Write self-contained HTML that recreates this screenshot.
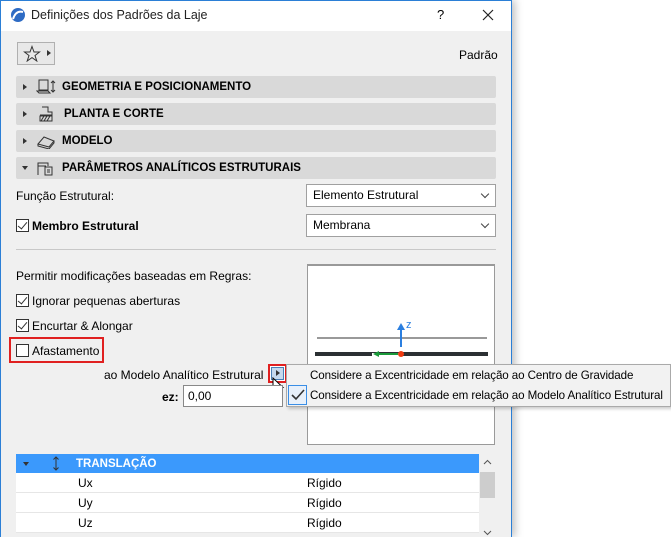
<!DOCTYPE html>
<html><head><meta charset="utf-8"><style>
*{box-sizing:border-box;margin:0;padding:0}
body{width:671px;height:537px;background:#fff;font-family:"Liberation Sans",sans-serif;font-size:12px;color:#000;position:relative;overflow:hidden;white-space:nowrap}
.abs{position:absolute}
.win{left:0;top:0;width:512px;height:537px;background:#f0f0f0;border-left:1px solid #2b7fd6;border-right:1px solid #2b7fd6;border-top:1px solid #2b7fd6;box-shadow:3px 0 8px rgba(0,0,0,.25)}
.title{left:1px;top:1px;width:510px;height:30px;background:#fff}
.bar{left:16px;width:480px;height:22px;background:#d9d9d9;border-radius:2px;font-weight:bold;font-size:11.5px;line-height:22px}
.bar .tri{position:absolute;left:7px;top:8px;width:0;height:0;border-top:3px solid transparent;border-bottom:3px solid transparent;border-left:4px solid #333}
.bar .tri.d{left:6px;top:9px;border-left:3px solid transparent;border-right:3px solid transparent;border-top:4px solid #333;border-bottom:0}
.bar span{position:absolute;left:46px}
.dd{left:306px;width:190px;height:23px;background:#fff;border:1px solid #a0a0a0;padding-left:6px;line-height:21px}
.dd:after{content:"";position:absolute;right:7px;top:6px;width:5px;height:5px;border-right:1px solid #444;border-bottom:1px solid #444;transform:rotate(45deg)}
.cb{width:13px;height:13px;border:1px solid #333;background:#fff}
.cb.on:after{content:"";position:absolute;left:3px;top:0px;width:4px;height:8px;border-right:1.5px solid #333;border-bottom:1.5px solid #333;transform:rotate(40deg)}
.row{left:16px;width:463px;height:20px;background:#fff;border-bottom:1px solid #e6e6e6;line-height:21px}
.pm{font-size:11.6px;letter-spacing:-0.1px}
</style></head><body>
<div class="abs win"></div>
<div class="abs title"></div>
<svg class="abs" style="left:10px;top:7px" width="16" height="16"><circle cx="8" cy="8" r="7" fill="#2d6bc4"/><path d="M3 12 Q6 3 13 5" stroke="#fff" stroke-width="2" fill="none"/></svg>
<div class="abs" style="left:31px;top:8px;font-size:12.5px;color:#222">Definições dos Padrões da Laje</div>
<div class="abs" style="left:437px;top:7px;font-size:13px">?</div>
<svg class="abs" style="left:482px;top:9px" width="12" height="12"><path d="M1 1L11 11M11 1L1 11" stroke="#222" stroke-width="1.2"/></svg>
<div class="abs" style="left:17px;top:42px;width:38px;height:23px;border:1px solid #b0b0b0;background:#e8e8e8"></div>
<svg class="abs" style="left:23px;top:45px" width="18" height="17"><path d="M9 1.5L11 7H16.5L12 10.5L13.8 16L9 12.6L4.2 16L6 10.5L1.5 7H7Z" fill="none" stroke="#333" stroke-width="1"/></svg>
<div class="abs" style="left:47px;top:50px;border-top:3px solid transparent;border-bottom:3px solid transparent;border-left:4px solid #333"></div>
<div class="abs" style="left:459px;top:48px">Padrão</div>

<div class="abs bar" style="top:76px"><i class="tri"></i><svg class="abs" style="left:20px;top:3px" width="22" height="16"><rect x="3" y="1" width="9" height="10" fill="none" stroke="#333"/><path d="M1 12h11l2 2H3z" fill="none" stroke="#333"/><path d="M17 2v11M15 4l2-2 2 2M15 11l2 2 2-2" stroke="#333" fill="none"/></svg><span style="left:46px">GEOMETRIA E POSICIONAMENTO</span></div>
<div class="abs bar" style="top:103px"><i class="tri"></i><svg class="abs" style="left:20px;top:3px" width="22" height="16"><path d="M6 1h6v5h4v3H4" fill="none" stroke="#333"/><rect x="4" y="10" width="12" height="5" fill="none" stroke="#333"/><path d="M5 15l3-5M8 15l3-5M11 15l3-5" stroke="#333"/></svg><span style="left:48px">PLANTA E CORTE</span></div>
<div class="abs bar" style="top:130px"><i class="tri"></i><svg class="abs" style="left:20px;top:3px" width="22" height="16"><path d="M2 11l6-7 10 4-5 6z" fill="none" stroke="#333"/><path d="M2 11v2l11 3 5-6v-2" fill="none" stroke="#333"/></svg><span style="left:46px">MODELO</span></div>
<div class="abs bar" style="top:157px"><i class="tri d"></i><svg class="abs" style="left:20px;top:3px" width="22" height="16"><path d="M2 15V3h10v3M2 6h8" fill="none" stroke="#333"/><rect x="9" y="7" width="7" height="8" fill="none" stroke="#333"/><path d="M11 10h3M11 12h3" stroke="#333"/></svg><span style="left:46px">PARÂMETROS ANALÍTICOS ESTRUTURAIS</span></div>

<div class="abs" style="left:16px;top:189px">Função Estrutural:</div>
<div class="abs dd" style="top:184px">Elemento Estrutural</div>
<div class="abs cb on" style="left:16px;top:219px"></div>
<div class="abs" style="left:32px;top:219px;font-weight:bold">Membro Estrutural</div>
<div class="abs dd" style="top:214px">Membrana</div>
<div class="abs" style="left:16px;top:249px;width:480px;height:1px;background:#c8c8c8"></div>

<div class="abs" style="left:16px;top:269px">Permitir modificações baseadas em Regras:</div>
<div class="abs cb on" style="left:16px;top:294px"></div><div class="abs" style="left:32px;top:294px">Ignorar pequenas aberturas</div>
<div class="abs cb on" style="left:16px;top:319px"></div><div class="abs" style="left:32px;top:319px">Encurtar &amp; Alongar</div>
<div class="abs" style="left:9px;top:337px;width:95px;height:26px;border:2px solid #e02020"></div>
<div class="abs cb" style="left:16px;top:344px"></div><div class="abs" style="left:32px;top:344px">Afastamento</div>
<div class="abs" style="left:104px;top:368px">ao Modelo Analítico Estrutural</div>
<div class="abs" style="left:268px;top:364px;width:19px;height:19px;border:2px solid #e02020;background:#fff"></div>
<div class="abs" style="left:271px;top:367px;width:13px;height:13px;background:#c5d9ee;border:1px solid #4a7fb5"></div>
<div class="abs" style="left:276px;top:370px;border-top:3.5px solid transparent;border-bottom:3.5px solid transparent;border-left:4px solid #333"></div>
<svg class="abs" style="left:272px;top:377px" width="14" height="20"><path d="M1 1V15L4.5 11.5L7 17L9 16L6.5 10.5H11Z" fill="#fff" stroke="#000"/></svg>
<div class="abs" style="left:162px;top:390px;font-weight:bold">ez:</div>
<div class="abs" style="left:183px;top:385px;width:100px;height:22px;background:#fff;border:1px solid #888;padding-left:4px;line-height:20px">0,00</div>

<div class="abs" style="left:307px;top:264px;width:188px;height:181px;background:#fff;border:1px solid #9a9a9a;border-top:2px solid #999"></div>
<div class="abs" style="left:317px;top:337px;width:170px;height:2px;background:#999"></div>
<div class="abs" style="left:315px;top:352px;width:173px;height:4px;background:#2b3033"></div>
<div class="abs" style="left:372px;top:353px;width:28px;height:3px;background:#fff"></div>
<div class="abs" style="left:378px;top:353px;width:20px;height:2px;background:#1a9a3a"></div>
<div class="abs" style="left:373px;top:351px;border-top:3px solid transparent;border-bottom:3px solid transparent;border-right:6px solid #1a9a3a"></div>
<div class="abs" style="left:398px;top:351px;width:6px;height:6px;border-radius:50%;background:#f03a10"></div>
<div class="abs" style="left:400px;top:328px;width:2px;height:19px;background:#2b7fe0"></div>
<div class="abs" style="left:397px;top:323px;border-left:4px solid transparent;border-right:4px solid transparent;border-bottom:7px solid #2b7fe0"></div>
<div class="abs" style="left:406px;top:319px;color:#2b7fe0;font-size:11px">z</div>

<div class="abs" style="left:286px;top:364px;width:385px;height:43px;background:#f2f2f2;border:1px solid #aaa;box-shadow:2px 2px 3px rgba(0,0,0,.2)"></div>
<div class="abs pm" style="left:310px;top:369px">Considere a Excentricidade em relação ao Centro de Gravidade</div>
<div class="abs" style="left:288px;top:385px;width:19px;height:20px;border:1px solid #3a8ee6;background:#e8f0fa"></div>
<svg class="abs" style="left:291px;top:389px" width="14" height="12"><path d="M1 6l4 4 8-9" stroke="#333" stroke-width="1.6" fill="none"/></svg>
<div class="abs pm" style="left:310px;top:389px">Considere a Excentricidade em relação ao Modelo Analítico Estrutural</div>

<div class="abs" style="left:16px;top:454px;width:463px;height:19px;background:#3b99fc;color:#fff;font-weight:bold;font-size:11.5px;line-height:20px"><span class="abs" style="left:7px;top:8px;border-left:3px solid transparent;border-right:3px solid transparent;border-top:4px solid #333"></span><svg class="abs" style="left:36px;top:2px" width="8" height="15"><path d="M4 1v13M1.5 3.5L4 1l2.5 2.5M1.5 11.5L4 14l2.5-2.5" stroke="#333" fill="none"/></svg><span class="abs" style="left:60px">TRANSLAÇÃO</span></div>
<div class="abs row" style="top:473px"><span class="abs" style="left:62px">Ux</span><span class="abs" style="left:291px">Rígido</span></div>
<div class="abs row" style="top:493px"><span class="abs" style="left:62px">Uy</span><span class="abs" style="left:291px">Rígido</span></div>
<div class="abs row" style="top:513px"><span class="abs" style="left:62px">Uz</span><span class="abs" style="left:291px">Rígido</span></div>
<div class="abs" style="left:480px;top:454px;width:16px;height:83px;background:#f0f0f0"></div>
<div class="abs" style="left:480px;top:472px;width:15px;height:26px;background:#cdcdcd"></div>
<svg class="abs" style="left:483px;top:459px" width="9" height="6"><path d="M1 5l3.5-3.5L8 5" stroke="#555" fill="none"/></svg>
<svg class="abs" style="left:483px;top:530px" width="9" height="6"><path d="M1 1l3.5 3.5L8 1" stroke="#555" fill="none"/></svg>
</body></html>
